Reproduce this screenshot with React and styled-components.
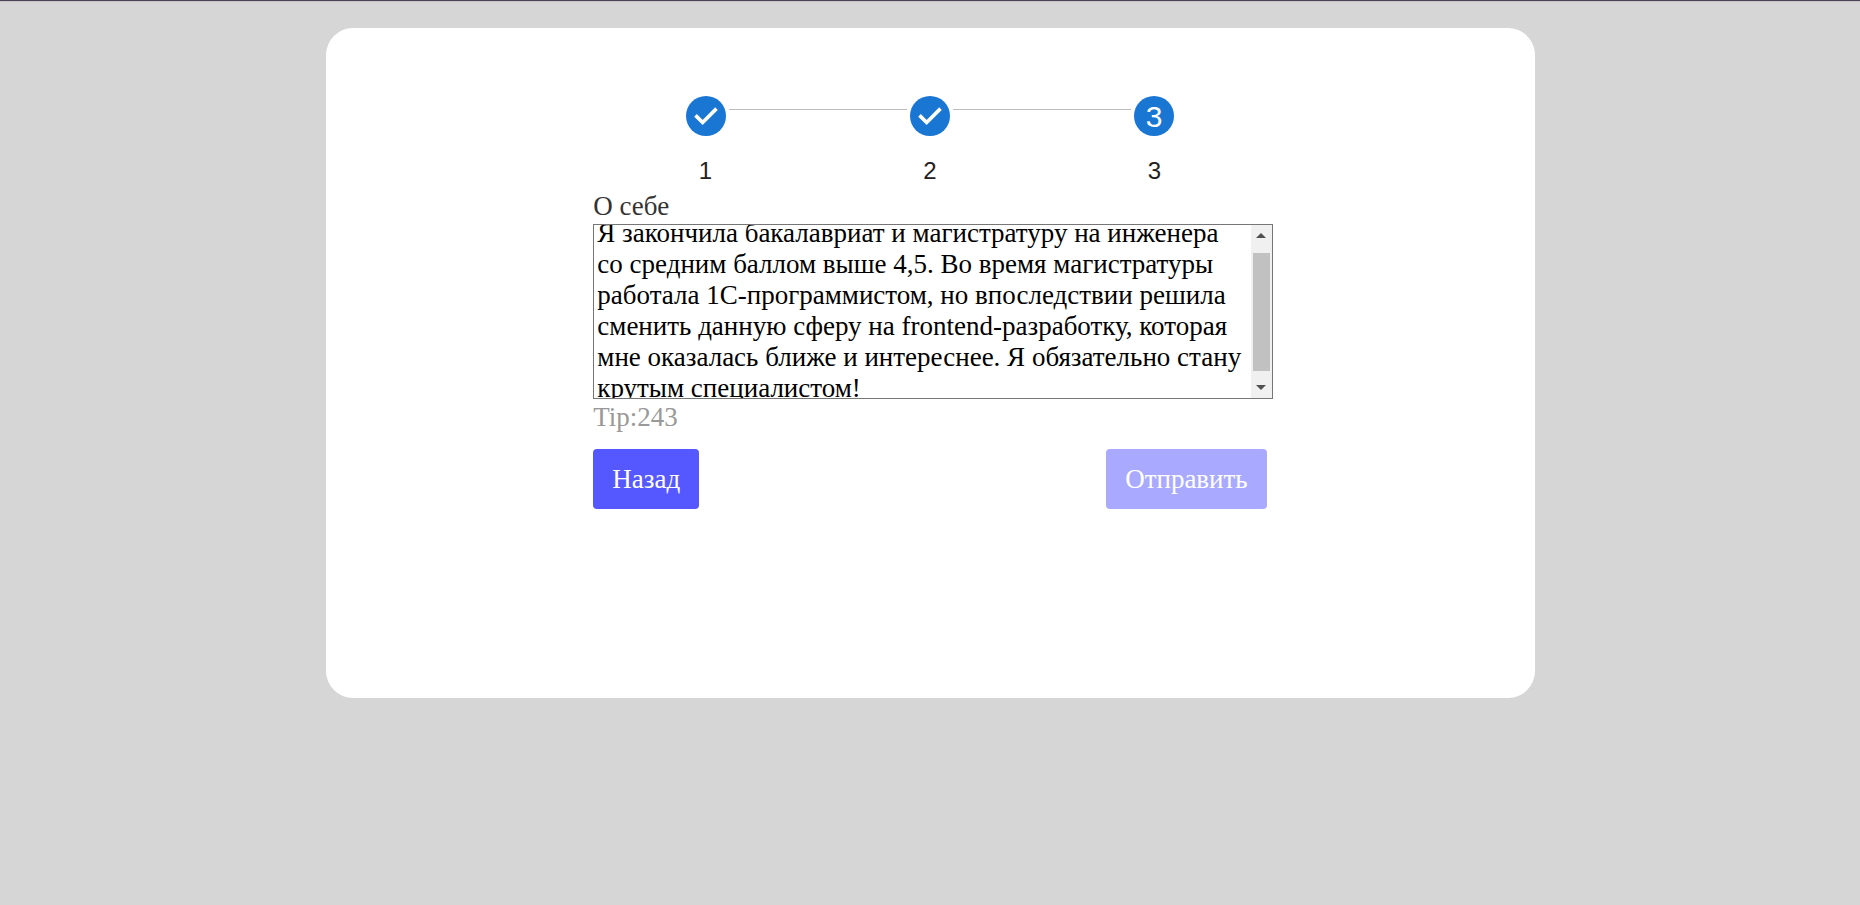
import React, { useLayoutEffect, useRef, useState } from "react";
import styled, { createGlobalStyle } from "styled-components";

const GlobalStyle = createGlobalStyle`
  body {
    margin: 0;
    background: #d6d6d6;
    font-family: "Liberation Serif", "Times New Roman", serif;
    font-size: 27px;
    line-height: 31px;
  }
`;

const Page = styled.div`
  border-top: 1px solid #4a4456;
  box-shadow: inset 0 1px #c6c2c8;
  padding: 27px 0;
  box-sizing: border-box;
  min-height: 100vh;
`;

const Card = styled.main`
  box-sizing: border-box;
  width: 65%;
  min-height: 670px;
  margin: 0 auto;
  padding: 68px 24px;
  border-radius: 27px;
  background: #fff;
`;

const Form = styled.form`
  width: 58%;
  min-width: 480px;
  max-width: 674px;
  margin: 0 auto;
`;

const Stepper = styled.ol`
  display: flex;
  margin: 0;
  padding: 0;
  list-style: none;
`;

const Step = styled.li`
  flex: 1;
  display: flex;
  flex-direction: column;
  align-items: center;
  font-family: "Liberation Sans", Arial, sans-serif;
  font-size: 24px;
  line-height: 33px;
  color: #212121;
`;

const StepTrack = styled.div`
  align-self: stretch;
  display: flex;
  gap: 3px;
  margin-bottom: 18px;
`;

const Connector = styled.span`
  flex: 1;
  height: 1px;
  margin-top: 13px;
  background: ${({ $hidden }) => ($hidden ? "transparent" : "#bdbdbd")};
`;

const StepIcon = styled.svg`
  width: 40px;
  height: 40px;
  fill: #1976d2;

  text {
    fill: #fff;
    font-size: 18px;
    text-anchor: middle;
  }
`;

const Label = styled.label`
  display: block;
  margin-top: 4px;
  color: #333;
`;

const Field = styled.div`
  display: flex;
  width: calc(100% + 6px);
  height: 175px;
  margin-top: 2px;
  box-sizing: border-box;
  border: 1px solid #767676;
  background: #fff;
`;

const TextArea = styled.textarea`
  flex: 1;
  min-width: 0;
  box-sizing: border-box;
  padding: 3px;
  border: 0;
  outline: 0;
  resize: none;
  background: transparent;
  color: #000;
  font: inherit;
  scrollbar-width: none;
`;

const ScrollBar = styled.div`
  display: flex;
  flex-direction: column;
  width: 21px;
  background: #f0f0f0;
`;

const ScrollButton = styled.button`
  display: flex;
  align-items: center;
  justify-content: center;
  height: 21px;
  padding: 0;
  border: 0;
  background: transparent;

  svg {
    width: 10px;
    height: 5px;
    fill: #505050;
  }
`;

const ScrollTrack = styled.div`
  flex: 1;
  display: flex;
  flex-direction: column;
  padding: 0 2px;
`;

const ScrollThumb = styled.div`
  background: #c1c1c1;
`;

const Tip = styled.div`
  margin-top: 3px;
  color: #999;
`;

const Actions = styled.div`
  display: flex;
  justify-content: space-between;
  margin-top: 16px;
`;

const Button = styled.button`
  height: 60px;
  padding: 0 19px;
  border: 0;
  border-radius: 4px;
  background: #5558ff;
  color: #fff;
  font: inherit;

  &:disabled {
    opacity: 0.5;
  }
`;

const steps = [
  { label: "1", done: true },
  { label: "2", done: true },
  { label: "3", done: false },
];

const initialText =
  "Я закончила бакалавриат и магистратуру на инженера со средним баллом выше 4,5. Во время магистратуры работала 1С-программистом, но впоследствии решила сменить данную сферу на frontend-разработку, которая мне оказалась ближе и интереснее. Я обязательно стану крутым специалистом!";

function ScrollingTextArea({ id, defaultValue }) {
  const area = useRef(null);
  const [thumb, setThumb] = useState({ size: 100, offset: 0 });

  const update = () => {
    const { scrollTop, scrollHeight, clientHeight } = area.current;
    setThumb({
      size: (clientHeight / scrollHeight) * 100,
      offset: (scrollTop / scrollHeight) * 100,
    });
  };

  useLayoutEffect(() => {
    area.current.scrollTop = 10;
    update();
    window.addEventListener("resize", update);
    return () => window.removeEventListener("resize", update);
  }, []);

  const scrollBy = (top) => area.current.scrollBy({ top });

  return (
    <Field>
      <TextArea id={id} ref={area} defaultValue={defaultValue} onScroll={update} onInput={update} />
      <ScrollBar>
        <ScrollButton type="button" aria-label="Вверх" onClick={() => scrollBy(-31)}>
          <svg viewBox="0 0 10 5"><path d="M0 5 5 0l5 5z" /></svg>
        </ScrollButton>
        <ScrollTrack>
          <div style={{ flexGrow: thumb.offset }} />
          <ScrollThumb style={{ flexGrow: thumb.size }} />
          <div style={{ flexGrow: 100 - thumb.size - thumb.offset }} />
        </ScrollTrack>
        <ScrollButton type="button" aria-label="Вниз" onClick={() => scrollBy(31)}>
          <svg viewBox="0 0 10 5"><path d="M0 0h10L5 5z" /></svg>
        </ScrollButton>
      </ScrollBar>
    </Field>
  );
}

export default function App() {
  return (
    <Page>
      <GlobalStyle />
      <Card>
        <Form onSubmit={(event) => event.preventDefault()}>
          <Stepper>
            {steps.map(({ label, done }, index) => (
              <Step key={label}>
                <StepTrack>
                  <Connector $hidden={index === 0} />
                  <StepIcon viewBox="0 0 24 24">
                    {done ? (
                      <>
                        <circle cx="12" cy="12" r="12" />
                        <path
                          d="M5.700 11.600 10 15.900 18.300 7.600"
                          fill="none"
                          stroke="#fff"
                          strokeWidth="2.200"
                        />
                      </>
                    ) : (
                      <>
                        <circle cx="12" cy="12" r="12" />
                        <text x="12" y="18.500">{label}</text>
                      </>
                    )}
                  </StepIcon>
                  <Connector $hidden={index === steps.length - 1} />
                </StepTrack>
                {label}
              </Step>
            ))}
          </Stepper>
          <Label htmlFor="about">О себе</Label>
          <ScrollingTextArea id="about" defaultValue={initialText} />
          <Tip>Tip:243</Tip>
          <Actions>
            <Button type="button">Назад</Button>
            <Button type="submit" disabled>Отправить</Button>
          </Actions>
        </Form>
      </Card>
    </Page>
  );
}
